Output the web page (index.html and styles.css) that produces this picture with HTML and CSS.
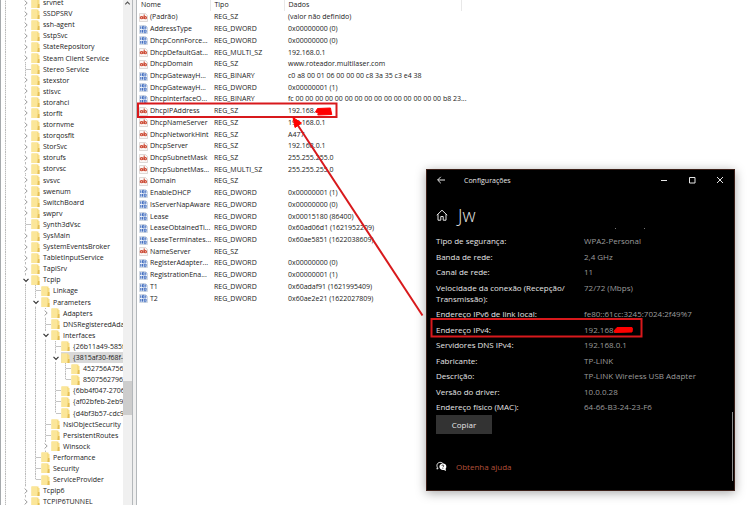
FILE: index.html
```html
<!DOCTYPE html>
<html lang="pt-BR">
<head>
  <meta charset="UTF-8">
  <meta name="viewport" content="width=device-width, initial-scale=1.0">
  <title>Editor do Registro</title>
  <link rel="stylesheet" href="styles.css">
</head>
<body>

<svg width="0" height="0" class="defs">
  <symbol id="folder" viewBox="0 0 9 10">
    <path d="M0.5 0.5h7v1.5h1v8h-8z" fill="#f7dd83"/>
    <path d="M0.5 0.5h5.5v9.5h-5.5z" fill="#fbe699"/>
    <path d="M7 6h1.5v4h-2z" fill="#e3bd55"/>
  </symbol>
  <symbol id="sz" viewBox="0 0 9 9">
    <path d="M0.5 0.5h6l2 2v6h-8z" fill="#fbf6f4" stroke="#c9c2c0" stroke-width="0.6"/>
    <g fill="none" stroke="#cc4a34" stroke-width="1.1">
      <circle cx="2.4" cy="4.7" r="1.1"/>
      <path d="M3.8 3.200v2.900M5.200 1.500v4.600"/>
      <circle cx="6.400" cy="4.700" r="1.1"/>
    </g>
  </symbol>
  <symbol id="bin" viewBox="0 0 9 9">
    <path d="M0.5 0.5h6l2 2v6h-8z" fill="#eef3fb" stroke="#b9c2d2" stroke-width="0.6"/>
    <path d="M1.8 1.3v2.6M3.6 1.3v2.6M5 1.3v2.6M6.8 1.3v2.6M1.8 5v2.7M3.4 5v2.7M5.2 5v2.7M7 5v2.7" stroke="#2f5fb8" stroke-width="1"/>
    <path d="M3.6 1.3h1.4M3.6 3.9h1.4M5.2 5h1.8M5.2 7.7h1.8" stroke="#2f5fb8" stroke-width="0.6"/>
  </symbol>
  <symbol id="closed" viewBox="0 0 10 8">
    <path d="M0 0h10v8H0z" fill="#fff"/>
    <path d="M3.6 1.5l2.6 2.5-2.6 2.5" fill="none" stroke="#9a9a9a" stroke-width="1"/>
  </symbol>
  <symbol id="open" viewBox="0 0 10 8">
    <path d="M0 0h10v8H0z" fill="#fff"/>
    <path d="M2.5 2.8l2.5 2.5 2.5-2.5" fill="none" stroke="#333" stroke-width="1.2"/>
  </symbol>
</svg>

<main class="regedit">
  <nav class="tree-pane">
    <ul class="tree" id="tree"></ul>
    <div class="scrollbar">
      <svg viewBox="0 0 10 6"><path d="M2.5 4.5l2.5-2.5 2.5 2.5" fill="none" stroke="#555" stroke-width="1.2"/></svg>
      <div class="thumb"></div>
    </div>
  </nav>
  <div class="splitter"></div>
  <section class="values-pane">
    <table class="values">
      <thead>
        <tr><th class="name">Nome</th><th class="type">Tipo</th><th class="data">Dados</th><th></th></tr>
      </thead>
      <tbody id="values"></tbody>
    </table>
  </section>
</main>

<section class="settings">
  <header class="titlebar">
    <button class="tb-button" aria-label="Voltar">
      <svg viewBox="0 0 10 10"><path d="M9 5H1.8M4.8 1.800L1.6 5l3.200 3.200"/></svg>
    </button>
    <span class="app">Configurações</span>
    <button class="tb-button" aria-label="Minimizar">
      <svg viewBox="0 0 10 10"><path d="M2 5.5h6"/></svg>
    </button>
    <button class="tb-button" aria-label="Maximizar">
      <svg viewBox="0 0 10 10"><path d="M2.5 2.5h5.5v5.5h-5.5z"/></svg>
    </button>
    <button class="tb-button" aria-label="Fechar">
      <svg viewBox="0 0 10 10"><path d="M2 2l6 6M8 2l-6 6"/></svg>
    </button>
  </header>

  <h1>
    <svg viewBox="0 0 12 12"><path d="M0.8 6.2L6 1.2l5.2 5M2 5.2v6h2.8v-3.700h2.4v3.700h2.800v-6"/></svg>
    Jw
  </h1>

  <div class="clipped"><i></i><i></i></div>

  <dl class="info">
    <dt>Tipo de segurança:</dt><dd>WPA2-Personal</dd>
    <dt>Banda de rede:</dt><dd>2,4 GHz</dd>
    <dt>Canal de rede:</dt><dd>11</dd>
    <dt>Velocidade da conexão (Recepção/<br>Transmissão):</dt><dd>72/72 (Mbps)</dd>
    <dt>Endereço IPv6 de link local:</dt><dd>fe80::61cc:3245:7024:2f49%7</dd>
    <dt>Endereço IPv4:</dt><dd>192.168.</dd>
    <dt>Servidores DNS IPv4:</dt><dd>192.168.0.1</dd>
    <dt>Fabricante:</dt><dd>TP-LINK</dd>
    <dt>Descrição:</dt><dd>TP-LINK Wireless USB Adapter</dd>
    <dt>Versão do driver:</dt><dd>10.0.0.28</dd>
    <dt>Endereço físico (MAC):</dt><dd>64-66-B3-24-23-F6</dd>
  </dl>

  <button class="copy">Copiar</button>

  <a class="help" href="#">
    <svg viewBox="0 0 12 11">
      <path d="M2.600 7.500L1 8.300l0.500-2C0.200 4 1.600 1 4.600 1c1.400 0 2.600 0.500 3.200 1.600" fill="none" stroke="#fff"/>
      <path d="M7.500 2.300c2.200 0 3.800 1.400 3.800 3.400 0 0.900-0.300 1.600-0.800 2.200l0.400 2.600-2.200-1.300c-2.700 0.500-5-1-5-3.400 0-2 1.600-3.500 3.800-3.500z" fill="#fff"/>
      <path d="M6.300 4.800c0.200-1.300 2.400-1.100 2.200 0.200-0.100 0.700-1 0.700-1 1.500M7.500 7.200v0.800" fill="none" stroke="#000" stroke-width="0.800"/>
    </svg>
    <span>Obtenha ajuda</span>
  </a>
  <div class="settings-thumb"></div>
</section>

<!-- red pen marks -->
<svg class="marks" width="750" height="505" viewBox="0 0 750 505">
  <rect x="138" y="103.500" width="198.500" height="13.500"/>
  <rect x="431.500" y="319" width="210" height="17.500"/>
  <path d="M422.500 315.500L297 124"/>
  <path d="M293 117.500l8.500 5.500-6.500 4.500z" class="fill"/>
  <path d="M315.500 112l2-3.500 13-0.500 0.500 3 0.800 3.500-14 0.500 0.500-2z" class="fill"/>
  <path d="M614 331l3-3.500 15 0 0.500 1-0.500 3.500-17 0.500z" class="fill"/>
</svg>

<script>
  // one character per 10px guide cell:
  // | line, T branch, L last branch, > closed, v open
  const keys = [
    '| > srvnet', '| > SSDPSRV', '| > ssh-agent', '| > SstpSvc', '| > StateRepository',
    '| > Steam Client Service', '| T Stereo Service', '| > stexstor', '| > stisvc',
    '| > storahci', '| > storflt', '| > stornvme', '| > storqosflt', '| > StorSvc',
    '| > storufs', '| > storvsc', '| > svsvc', '| > swenum', '| > SwitchBoard',
    '| > swprv', '| T Synth3dVsc', '| > SysMain', '| > SystemEventsBroker',
    '| > TabletInputService', '| > TapiSrv', '| v Tcpip',
    '| |T Linkage', '| |v Parameters', '| ||> Adapters', '| ||T DNSRegisteredAdapters',
    '| ||v Interfaces', '| |||T {26b11a49-585f', '| |||v {3815af30-f68f-',
    '| ||||T 452756A756', '| ||||L 85075627961', '| |||T {6bb4f047-2706',
    '| |||T {af02bfeb-2eb9', '| |||L {d4bf3b57-cdc9', '| ||T NsiObjectSecurity',
    '| ||T PersistentRoutes', '| ||> Winsock', '| |T Performance', '| |T Security',
    '| |L ServiceProvider', '| > Tcpip6', '| > TCPIP6TUNNEL'
  ];
  const cells = {
    ' ': '<i></i>',
    '|': '<i class="line"></i>',
    'T': '<i class="line branch"></i>',
    'L': '<i class="line branch last"></i>',
    '>': '<i class="line"><svg><use href="#closed"/></svg></i>',
    'v': '<i class="line"><svg><use href="#open"/></svg></i>'
  };
  document.getElementById('tree').innerHTML = keys.map(k => {
    const [, guides, name] = k.match(/^([| ]+[>vTL]) (.*)$/);
    const selected = name.startsWith('{3815') ? ' class="selected"' : '';
    return `<li>${[...guides].map(c => cells[c]).join('')}<span${selected}><svg class="folder"><use href="#folder"/></svg>${name}</span></li>`;
  }).join('');

  const values = [
    ['(Padrão)', 'REG_SZ', '(valor não definido)'],
    ['AddressType', 'REG_DWORD', '0x00000000 (0)'],
    ['DhcpConnForce...', 'REG_DWORD', '0x00000000 (0)'],
    ['DhcpDefaultGat...', 'REG_MULTI_SZ', '192.168.0.1'],
    ['DhcpDomain', 'REG_SZ', 'www.roteador.multilaser.com'],
    ['DhcpGatewayH...', 'REG_BINARY', 'c0 a8 00 01 06 00 00 00 c8 3a 35 c3 e4 38'],
    ['DhcpGatewayH...', 'REG_DWORD', '0x00000001 (1)'],
    ['DhcpInterfaceO...', 'REG_BINARY', 'fc 00 00 00 00 00 00 00 00 00 00 00 00 00 00 00 b8 23...'],
    ['DhcpIPAddress', 'REG_SZ', '192.168.'],
    ['DhcpNameServer', 'REG_SZ', '192.168.0.1'],
    ['DhcpNetworkHint', 'REG_SZ', 'A477'],
    ['DhcpServer', 'REG_SZ', '192.168.0.1'],
    ['DhcpSubnetMask', 'REG_SZ', '255.255.255.0'],
    ['DhcpSubnetMas...', 'REG_MULTI_SZ', '255.255.255.0'],
    ['Domain', 'REG_SZ', ''],
    ['EnableDHCP', 'REG_DWORD', '0x00000001 (1)'],
    ['IsServerNapAware', 'REG_DWORD', '0x00000000 (0)'],
    ['Lease', 'REG_DWORD', '0x00015180 (86400)'],
    ['LeaseObtainedTi...', 'REG_DWORD', '0x60ad06d1 (1621952209)'],
    ['LeaseTerminates...', 'REG_DWORD', '0x60ae5851 (1622038609)'],
    ['NameServer', 'REG_SZ', ''],
    ['RegisterAdapter...', 'REG_DWORD', '0x00000000 (0)'],
    ['RegistrationEna...', 'REG_DWORD', '0x00000001 (1)'],
    ['T1', 'REG_DWORD', '0x60adaf91 (1621995409)'],
    ['T2', 'REG_DWORD', '0x60ae2e21 (1622027809)']
  ];
  document.getElementById('values').innerHTML = values.map(([name, type, data]) => {
    const icon = type.endsWith('SZ') ? 'sz' : 'bin';
    return `<tr><td><svg><use href="#${icon}"/></svg>${name}</td><td>${type}</td><td>${data}</td><td></td></tr>`;
  }).join('');
</script>

</body>
</html>
```
FILE: styles.css
```css
* {
  box-sizing: border-box;
}
body {
  margin: 0;
  height: 100vh;
  overflow: hidden;
  position: relative;
  background: #fff;
  color: #222;
  font-family: "Open Sans", "Noto Sans", sans-serif;
  font-size: 7px;
}
.defs {
  position: absolute;
}
.regedit {
  display: flex;
  height: 100%;
}

/* key tree */
.tree-pane {
  flex: none;
  display: flex;
  width: 132px;
  border-left: 1px solid #a5a9ac;
}
.tree {
  flex: 1;
  display: flex;
  flex-direction: column;
  height: calc(100vh + 5px);
  margin: -3px 0 0;
  padding: 0;
  overflow: hidden;
  list-style: none;
}
.tree li {
  flex: 1 1 0;
  min-height: 0;
  display: flex;
  align-items: center;
  white-space: nowrap;
  line-height: 11px;
}
.tree i {
  flex: none;
  position: relative;
  width: 10px;
  height: 100%;
  display: flex;
  align-items: center;
}
.tree .line {
  background: repeating-linear-gradient(#bbb 0 1px, #e4e4e4 1px 2px) 4px 0 / 1px 100% no-repeat;
}
.tree .last {
  background-size: 1px 50%;
}
.tree .branch::after {
  content: "";
  width: 5px;
  height: 1px;
  margin-left: 5px;
  background: #c4c4c4;
}
.tree i svg {
  width: 10px;
  height: 8px;
}
.tree span {
  display: flex;
  align-items: center;
}
.tree .selected {
  flex: 1;
  background: #d9d9d9;
}
.folder {
  flex: none;
  width: 9px;
  height: 10px;
  margin-right: 3px;
}
.scrollbar {
  width: 9px;
  background: #f0f0f0;
}
.scrollbar svg {
  display: block;
  width: 9px;
  height: 6px;
}
.thumb {
  height: 34px;
  margin-top: 375px;
  background: #cdcdcd;
}
.splitter {
  flex: none;
  width: 5px;
  background: #f0f0f0;
  border-left: 1px solid #b4b8bb;
  border-right: 1px solid #b4b8bb;
}

/* value list */
.values-pane {
  flex: 1;
}
.values {
  width: 100%;
  height: 304px;
  table-layout: fixed;
  border-collapse: collapse;
  line-height: 11px;
}
.values th,
.values td {
  padding: 0 0 0 4px;
  text-align: left;
  font-weight: normal;
  white-space: nowrap;
}
.values th {
  height: 11px;
  border-right: 1px solid #e8e8e8;
  padding-bottom: 2px;
  line-height: 9px;
}
.values th:last-child {
  border: 0;
}
.values .name {
  width: 73px;
}
.values .type {
  width: 74px;
}
.values .data {
  width: 177px;
}
.values td svg {
  width: 9px;
  height: 9px;
  margin: 0 2px 0 -2px;
  vertical-align: middle;
}

/* settings window */
.settings {
  position: absolute;
  left: 426px;
  top: 169px;
  width: 309px;
  height: 322px;
  display: flex;
  flex-direction: column;
  align-items: flex-start;
  padding-left: 9px;
  background: #000;
  border: 1px solid #3c2019;
  box-shadow: 0 2px 10px rgba(0, 0, 0, 0.35);
  color: #e6e6e6;
  font-size: 8px;
}
.titlebar {
  align-self: stretch;
  display: flex;
  align-items: center;
  height: 21px;
  font-size: 7px;
}
.app {
  flex: 1;
  margin-left: 18px;
}
.tb-button {
  width: 28px;
  height: 20px;
  padding: 0;
  border: 0;
  background: none;
}
.tb-button:first-child {
  width: 10px;
}
.tb-button svg,
.settings h1 svg {
  width: 10px;
  height: 10px;
  fill: none;
  stroke: #e6e6e6;
  stroke-width: 1;
}
.settings h1 {
  display: flex;
  align-items: center;
  gap: 10px;
  height: 24px;
  margin: 12px 0 0;
  font-size: 18px;
  font-weight: 300;
}
.settings h1 svg {
  width: 12px;
  height: 12px;
}
.clipped {
  display: flex;
  gap: 28px;
  margin: 1px 0 0 179px;
}
.clipped i {
  width: 1px;
  height: 1px;
  background: #777;
}
.info {
  display: grid;
  grid-template-columns: 148px 1fr;
  align-content: space-between;
  height: 177px;
  margin: 6px 0 0;
  line-height: 11px;
}
.info dd {
  margin: 0;
  color: #9c9c9c;
}
.copy {
  width: 56px;
  height: 19px;
  margin-top: 3px;
  padding: 0;
  border: 0;
  background: #333;
  color: #e6e6e6;
  font: inherit;
}
.help {
  display: flex;
  align-items: center;
  gap: 9px;
  margin-top: 27px;
  color: #b4513a;
  text-decoration: none;
}
.help svg {
  width: 11px;
  height: 11px;
}
.settings-thumb {
  position: absolute;
  right: 1px;
  top: 242px;
  width: 1px;
  height: 69px;
  background: #8c8c8c;
}

.marks {
  position: absolute;
  left: 0;
  top: 0;
  pointer-events: none;
  fill: none;
  stroke: #d8191c;
  stroke-width: 2;
}
.marks .fill {
  fill: #f00;
  stroke: #f00;
  stroke-width: 1;
}
```
